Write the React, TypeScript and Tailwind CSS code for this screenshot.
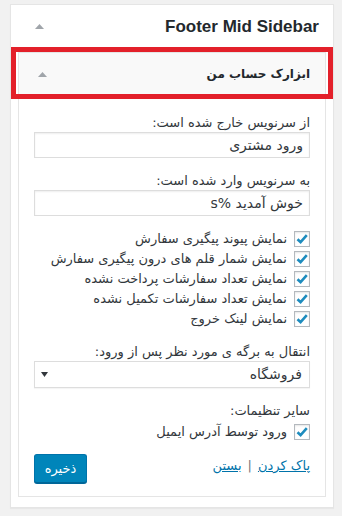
import React from "react";

const fa = "font-['Tahoma','DejaVu_Sans',sans-serif]";

function UpArrow() {
  return (
    <svg width="9" height="5" viewBox="0 0 9 5" className="block">
      <path d="M0 5 L4.5 0 L9 5 Z" fill="#a0a5aa" />
    </svg>
  );
}

function Check() {
  return (
    <span className="w-[16px] h-[16px] shrink-0 border border-[#b4b9be] bg-white shadow-[inset_0_1px_2px_rgba(0,0,0,0.1)] flex items-center justify-center">
      <svg width="14" height="14" viewBox="0 0 14 14" className="block">
        <path d="M2.5 7.2 L5.6 10.2 L11.8 3.2" fill="none" stroke="#1e8cbe" strokeWidth="2.6" strokeLinecap="butt" strokeLinejoin="miter" />
      </svg>
    </span>
  );
}

function Row({ text }: { text: string }) {
  return (
    <div className="h-[20px] flex items-center gap-[7px]">
      <Check />
      <span className="text-[13px] text-[#32373c] leading-[16px] whitespace-nowrap">{text}</span>
    </div>
  );
}

function Label({ text, className = "" }: { text: string; className?: string }) {
  return (
    <div className={"h-[16px] leading-[16px] text-[13px] text-[#32373c] whitespace-nowrap " + className}>{text}</div>
  );
}

function Input({ value }: { value: string }) {
  return (
    <div className="h-[26px] border border-[#dddddd] shadow-[inset_0_1px_2px_rgba(0,0,0,0.07)] bg-white flex items-center pr-[6px] text-[14px] text-[#32373c] whitespace-nowrap">
      {value}
    </div>
  );
}

export default function App() {
  return (
    <div className={"w-[342px] h-[516px] bg-[#f1f1f1] pt-[4px] pl-[10px] pr-[8px] overflow-hidden " + fa}>
      <div dir="rtl" className="relative bg-white border border-[#e5e5e5] shadow-[0_1px_1px_rgba(0,0,0,0.04)]">
        <div className="h-[42px] flex items-center justify-between pr-[14px] pl-[24px]">
          <h2 className="font-['Liberation_Sans',Arial,sans-serif] font-bold text-[17px] text-[#23282d] leading-none" dir="ltr">
            Footer Mid Sidebar
          </h2>
          <UpArrow />
        </div>

        <div className="mt-[5px] mx-[7px] mb-[10px] border border-[#e5e5e5]">
          <div className="h-[42px] bg-[#f9f9f9] flex items-center justify-between pr-[15px] pl-[19px]">
            <span className="text-[12px] font-bold text-[#23282d] whitespace-nowrap">ابزارک حساب من</span>
            <UpArrow />
          </div>

          <div className="px-[15px] pt-[20px] pb-[13px] flex flex-col">
            <Label text="از سرنویس خارج شده است:" />
            <div className="mt-[1px]">
              <Input value="ورود مشتری" />
            </div>
            <Label text="به سرنویس وارد شده است:" className="mt-[15px]" />
            <div className="mt-[1px]">
              <Input value="خوش آمدید %s" />
            </div>

            <div className="mt-[13px] flex flex-col">
              <Row text="نمایش پیوند پیگیری سفارش" />
              <Row text="نمایش شمار قلم های درون پیگیری سفارش" />
              <Row text="نمایش تعداد سفارشات پرداخت نشده" />
              <Row text="نمایش تعداد سفارشات تکمیل نشده" />
              <Row text="نمایش لینک خروج" />
            </div>

            <Label text="انتقال به برگه ی مورد نظر پس از ورود:" className="mt-[15px]" />
            <div className="mt-[1px] h-[27px] border border-[#dddddd] shadow-[0_1px_1px_rgba(0,0,0,0.04)] bg-white flex items-center justify-between pr-[7px] pl-[6px]">
              <span className="text-[14px] text-[#32373c] whitespace-nowrap">فروشگاه</span>
              <svg width="7" height="5" viewBox="0 0 7 5" className="block">
                <path d="M0 0 L7 0 L3.5 5 Z" fill="#32373c" />
              </svg>
            </div>

            <Label text="سایر تنظیمات:" className="mt-[15px]" />
            <div className="mt-[3px]">
              <Row text="ورود توسط آدرس ایمیل" />
            </div>

            <div className="mt-[12px] flex items-start justify-between">
              <div className="pt-[2px] flex items-center gap-[6px] text-[13px] whitespace-nowrap">
                <a href="#" className="text-[#0073aa] underline">پاک کردن</a>
                <span className="text-[#72777c]">|</span>
                <a href="#" className="text-[#0073aa] underline">بستن</a>
              </div>
              <button className="h-[29px] w-[53px] rounded-[3px] bg-[#0085ba] border border-[#0073aa] border-b-[#006799] shadow-[0_1px_0_#006799] text-white text-[13px] flex items-center justify-center">
                ذخیره
              </button>
            </div>
          </div>
        </div>

        <div className="absolute left-0 right-0 top-[42px] h-[52px] border-[5px] border-[#e3202a] pointer-events-none" />
      </div>
    </div>
  );
}
